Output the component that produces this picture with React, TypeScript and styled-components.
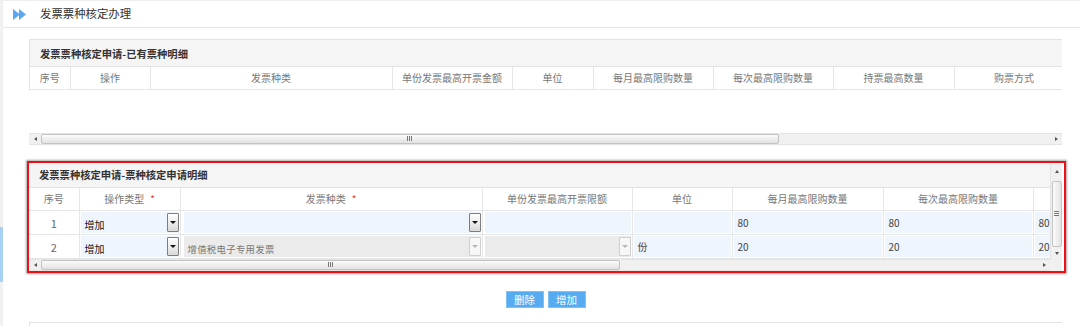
import React from 'react';
import styled, { createGlobalStyle } from 'styled-components';

const GlobalStyle = createGlobalStyle`
  html, body {
    margin: 0;
    padding: 0;
    background: #fff;
  }
  body {
    font-family: "Noto Sans CJK SC", "Liberation Sans", sans-serif;
    color: #333;
  }
  * {
    box-sizing: border-box;
  }
`

const Page = styled.div`
  width: 1080px;
  height: 326px;
  overflow: hidden;
  display: flex;
`

const SideEdge = styled.div`
  width: 3px;
  flex: none;
  background: #f1f1f1;
  padding-top: 227px;
`

const SideMark = styled.div`
  height: 55px;
  background: #a8d1f6;
`

const Main = styled.div`
  flex: 1;
  min-width: 0;
  display: flex;
  flex-direction: column;
`

const TopBar = styled.div`
  height: 28px;
  flex: none;
  border-top: 1px solid #eeeeee;
  border-bottom: 1px solid #e4e4e4;
  display: flex;
  align-items: center;
  padding-left: 10px;
`

const PageTitle = styled.span`
  margin-left: 14px;
  font-size: 11.4px;
  color: #333;
  line-height: 1;
`

const Content = styled.div`
  padding: 11px 0 0 26px;
  width: 1059px;
  display: flex;
  flex-direction: column;
`

const Panel = styled.div`
  width: 1033px;
  border-top: 1px solid #e3e3e3;
  border-left: 1px solid #e3e3e3;
  overflow: hidden;
`

const PanelTitle = styled.div<{ $h: number }>`
  height: ${p => p.$h}px;
  background: #f5f5f5;
  border-bottom: 1px solid #e3e3e3;
  display: flex;
  align-items: center;
  padding-left: 10px;
  font-size: 10.3px;
  font-weight: bold;
  color: #333;
  white-space: nowrap;
`

const Grid = styled.table<{ $w: number }>`
  width: ${p => p.$w}px;
  table-layout: fixed;
  border-collapse: collapse;
  border-spacing: 0;
`

const HeadCell = styled.th<{ $h: number }>`
  height: ${p => p.$h}px;
  padding: 0;
  border-right: 1px solid #e6e6e6;
  border-bottom: 1px solid #e6e6e6;
  font-size: 10px;
  font-weight: normal;
  color: #777;
  text-align: center;
  white-space: nowrap;
  overflow: hidden;
`

const Required = styled.span`
  color: #e33;
  margin-left: 6px;
`

const EmptyBody = styled.div`
  height: 43px;
`

const HScroll = styled.div`
  height: 12px;
  display: flex;
  background: #f0f0f0;
  border-top: 1px solid #e4e4e4;
  border-bottom: 1px solid #e4e4e4;
`

const VScroll = styled.div`
  width: 12px;
  display: flex;
  flex-direction: column;
  align-items: center;
  background: #f0f0f0;
  border-left: 1px solid #e4e4e4;
`

const ArrowBox = styled.div<{ $size: number; $vertical?: boolean }>`
  flex: none;
  ${p => (p.$vertical ? `height: ${p.$size}px; width: 100%;` : `width: ${p.$size}px;`)}
  display: flex;
  align-items: center;
  justify-content: center;
`

const Arrow = styled.span<{ $dir: 'left' | 'right' | 'up' | 'down' }>`
  width: 0;
  height: 0;
  ${p =>
    p.$dir === 'left'
      ? 'border-top: 2px solid transparent; border-bottom: 2px solid transparent; border-right: 3px solid #555;'
      : p.$dir === 'right'
      ? 'border-top: 2px solid transparent; border-bottom: 2px solid transparent; border-left: 3px solid #555;'
      : p.$dir === 'up'
      ? 'border-left: 2px solid transparent; border-right: 2px solid transparent; border-bottom: 3px solid #555;'
      : 'border-left: 2px solid transparent; border-right: 2px solid transparent; border-top: 3px solid #555;'}
`

const HThumb = styled.div<{ $w: number }>`
  width: ${p => p.$w}px;
  flex: none;
  height: 10px;
  border: 1px solid #c3c3c3;
  border-radius: 2px;
  background: linear-gradient(#fbfbfb, #e2e2e2);
  display: flex;
  align-items: center;
  justify-content: center;
`

const VThumb = styled.div<{ $h: number }>`
  height: ${p => p.$h}px;
  width: 10px;
  flex: none;
  border: 1px solid #c3c3c3;
  border-radius: 2px;
  background: linear-gradient(90deg, #fbfbfb, #e2e2e2);
  display: flex;
  align-items: center;
  justify-content: center;
`

const Track = styled.div`
  flex: 1;
`

const RedFrame = styled.div`
  margin: 16px 0 0 -2px;
  width: 1039px;
  border: 2px solid #ec0f16;
  box-shadow: 0 0 2px 1px rgba(0, 0, 0, 0.35);
  display: grid;
  grid-template-columns: 1021px 12px;
  grid-template-rows: 96px 12px;
  padding-right: 2px;
`

const DetailArea = styled.div`
  overflow: hidden;
`

const Corner = styled.div`
  background: #f0f0f0;
`

const BodyCell = styled.td`
  height: 24px;
  padding: 1px;
  border-right: 1px solid #e6e6e6;
  border-bottom: 1px solid #e6e6e6;
  font-size: 11px;
  color: #666;
  text-align: center;
  vertical-align: middle;
`

const Field = styled.div<{ $tone: 'edit' | 'off'; $indent?: number }>`
  height: 21px;
  margin-left: ${p => p.$indent ?? 0}px;
  background: ${p => (p.$tone === 'edit' ? '#eef5fd' : '#ebebeb')};
  display: flex;
  align-items: center;
  text-align: left;
  padding-left: 4px;
  font-size: 10px;
  color: #444;
  white-space: nowrap;
  overflow: hidden;
`

const FieldText = styled.span<{ $muted?: boolean }>`
  flex: 1;
  color: ${p => (p.$muted ? '#777' : '#111')};
  font-size: ${p => (p.$muted ? '9.4px' : '10px')};
  padding-top: ${p => (p.$muted ? '4px' : '3px')};
  letter-spacing: ${p => (p.$muted ? '0.3px' : '0')};
`

const DropBtn = styled.div<{ $off?: boolean }>`
  width: 12px;
  height: 19px;
  flex: none;
  border: 1px solid ${p => (p.$off ? '#cfcfcf' : '#7d7d7d')};
  border-radius: 1px;
  background: ${p => (p.$off ? '#f7f7f7' : 'linear-gradient(#ffffff, #d9d9d9)')};
  display: flex;
  align-items: center;
  justify-content: center;
  &::after {
    content: '';
    border-left: 3px solid transparent;
    border-right: 3px solid transparent;
    border-top: 3px solid ${p => (p.$off ? '#b5b5b5' : '#111')};
  }
`

const ButtonRow = styled.div`
  margin-top: 18px;
  width: 1033px;
  display: flex;
  justify-content: center;
  gap: 4px;
`

const ActionButton = styled.button`
  width: 38px;
  height: 17px;
  padding: 0;
  border: 1px solid #7fc0f6;
  background: #57abf1;
  color: #fff;
  font-family: inherit;
  font-size: 10.5px;
  line-height: 15px;
`

const NextPanel = styled.div`
  margin-top: 14px;
  width: 1033px;
  height: 10px;
  border-top: 1px solid #e2e2e2;
  border-left: 1px solid #e2e2e2;
`

const Grip = ({ vertical }: { vertical?: boolean }) => (
  <svg width={vertical ? 5 : 6} height={5} viewBox={vertical ? '0 0 5 5' : '0 0 6 5'}>
    {[0, 2, 4].map(i =>
      vertical ? (
        <rect key={i} x={0} y={i} width={5} height={1} fill="#777" />
      ) : (
        <rect key={i} x={i} y={0} width={1} height={5} fill="#777" />
      )
    )}
  </svg>
)

const DoubleArrow = () => (
  <svg width="13" height="11" viewBox="0 0 13 11">
    <polygon points="0,0 7,5.5 0,11" fill="#5ba6ef" />
    <polygon points="6,0 13,5.5 6,11" fill="#5ba6ef" />
  </svg>
)

const existingCols: [string, number][] = [
  ['序号', 40],
  ['操作', 80],
  ['发票种类', 242],
  ['单份发票最高开票金额', 120],
  ['单位', 81],
  ['每月最高限购数量', 120],
  ['每次最高限购数量', 120],
  ['持票最高数量', 121],
  ['购票方式', 120],
]

const applyCols: [string, number, boolean?][] = [
  ['序号', 50],
  ['操作类型', 101, true],
  ['发票种类', 302, true],
  ['单份发票最高开票限额', 150],
  ['单位', 100],
  ['每月最高限购数量', 151],
  ['每次最高限购数量', 150],
  ['持票最高数量', 100],
]

type Row = {
  no: number
  op: string
  kind: string
  unit: string
  month: string
  each: string
  hold: string
  locked: boolean
}

const rows: Row[] = [
  { no: 1, op: '增加', kind: '', unit: '', month: '80', each: '80', hold: '80', locked: false },
  { no: 2, op: '增加', kind: '增值税电子专用发票', unit: '份', month: '20', each: '20', hold: '20', locked: true },
]

const sum = (cols: [string, number, boolean?][]) => cols.reduce((a, c) => a + c[1], 0)

const App = () => {
  return (
    <Page>
      <GlobalStyle />
      <SideEdge>
        <SideMark />
      </SideEdge>
      <Main>
        <TopBar>
          <DoubleArrow />
          <PageTitle>发票票种核定办理</PageTitle>
        </TopBar>
        <Content>
          <Panel>
            <PanelTitle $h={27}>发票票种核定申请-已有票种明细</PanelTitle>
            <Grid $w={sum(existingCols)}>
              <colgroup>
                {existingCols.map(([name, w]) => (
                  <col key={name} style={{ width: w }} />
                ))}
              </colgroup>
              <thead>
                <tr>
                  {existingCols.map(([name]) => (
                    <HeadCell key={name} $h={22}>
                      {name}
                    </HeadCell>
                  ))}
                </tr>
              </thead>
            </Grid>
          </Panel>
          <EmptyBody />
          <HScroll style={{ width: 1033 }}>
            <ArrowBox $size={12}>
              <Arrow $dir="left" />
            </ArrowBox>
            <HThumb $w={738}>
              <Grip />
            </HThumb>
            <Track />
            <ArrowBox $size={12}>
              <Arrow $dir="right" />
            </ArrowBox>
          </HScroll>

          <RedFrame>
            <DetailArea>
              <PanelTitle $h={25}>发票票种核定申请-票种核定申请明细</PanelTitle>
              <Grid $w={sum(applyCols)}>
                <colgroup>
                  {applyCols.map(([name, w]) => (
                    <col key={name} style={{ width: w }} />
                  ))}
                </colgroup>
                <thead>
                  <tr>
                    {applyCols.map(([name, , req]) => (
                      <HeadCell key={name} $h={23}>
                        {name}
                        {req && <Required>*</Required>}
                      </HeadCell>
                    ))}
                  </tr>
                </thead>
                <tbody>
                  {rows.map(r => (
                    <tr key={r.no}>
                      <BodyCell>{r.no}</BodyCell>
                      <BodyCell>
                        <Field $tone="edit">
                          <FieldText>{r.op}</FieldText>
                          <DropBtn />
                        </Field>
                      </BodyCell>
                      <BodyCell>
                        <Field $tone={r.locked ? 'off' : 'edit'} $indent={2}>
                          <FieldText $muted>{r.kind}</FieldText>
                          <DropBtn $off={r.locked} />
                        </Field>
                      </BodyCell>
                      <BodyCell>
                        <Field $tone={r.locked ? 'off' : 'edit'} $indent={1}>
                          <FieldText />
                          {r.locked && <DropBtn $off />}
                        </Field>
                      </BodyCell>
                      <BodyCell>
                        <Field $tone="edit">{r.unit}</Field>
                      </BodyCell>
                      <BodyCell>
                        <Field $tone="edit">{r.month}</Field>
                      </BodyCell>
                      <BodyCell>
                        <Field $tone="edit">{r.each}</Field>
                      </BodyCell>
                      <BodyCell>
                        <Field $tone="edit">{r.hold}</Field>
                      </BodyCell>
                    </tr>
                  ))}
                </tbody>
              </Grid>
            </DetailArea>
            <VScroll>
              <ArrowBox $size={18} $vertical>
                <Arrow $dir="up" />
              </ArrowBox>
              <VThumb $h={66}>
                <Grip vertical />
              </VThumb>
              <Track />
              <ArrowBox $size={10} $vertical>
                <Arrow $dir="down" />
              </ArrowBox>
            </VScroll>
            <HScroll>
              <ArrowBox $size={12}>
                <Arrow $dir="left" />
              </ArrowBox>
              <HThumb $w={579}>
                <Grip />
              </HThumb>
              <Track />
              <ArrowBox $size={12}>
                <Arrow $dir="right" />
              </ArrowBox>
            </HScroll>
            <Corner />
          </RedFrame>

          <ButtonRow>
            <ActionButton>删除</ActionButton>
            <ActionButton>增加</ActionButton>
          </ButtonRow>
          <NextPanel />
        </Content>
      </Main>
    </Page>
  )
}

export default App
